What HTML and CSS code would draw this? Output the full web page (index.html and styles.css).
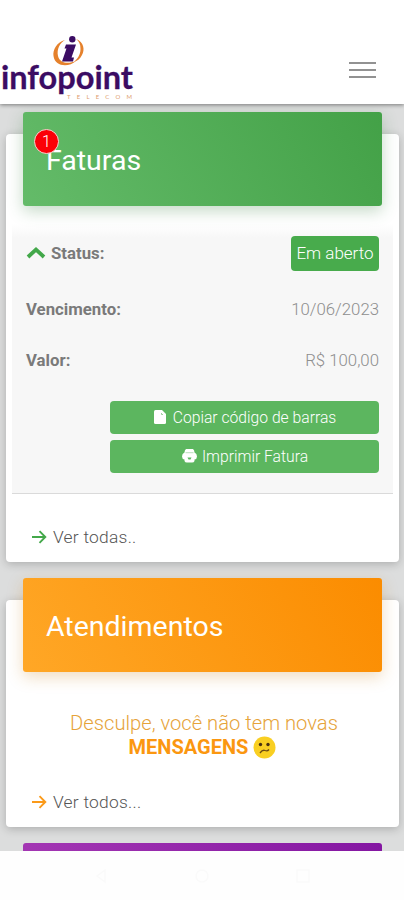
FILE: index.html
```html
<!DOCTYPE html>
<html lang="pt-BR">
<head>
<meta charset="utf-8">
<meta name="viewport" content="width=device-width, initial-scale=1">
<title>Infopoint Telecom</title>
<link rel="stylesheet" href="styles.css">
</head>
<body>
<header class="topbar">
  <svg class="logo" width="140" height="70" viewBox="0 0 140 70">
    <g fill="#e5812c">
      <path d="M65 7C57 9 52.500 17 53.500 23C55 34 69 34.500 76 28C69 31 60 31 58 23C56.500 16 60 10 65 7Z"/>
      <path d="M76 6C84 9 85 17 82 22C80 26 77 28 74 29C77 26 80.500 22 80.500 16C80.500 11 79 8 76 6Z"/>
    </g>
    <g fill="#3b0c63">
      <circle cx="72.300" cy="6.200" r="3.200"/>
      <path d="M66 11.500H76L71.500 24.500H74L73 28.500H62L66.500 15.500H64.500Z"/>
    </g>
    <text class="logo-name" x="1" y="55.500" textLength="132" lengthAdjust="spacingAndGlyphs">infopoint</text>
    <text class="logo-sub" x="67" y="65.500" textLength="65">TELECOM</text>
  </svg>
  <div class="burger"><i></i><i></i><i></i></div>
</header>
<main class="content">
  <section class="card card-invoices">
    <div class="card-head green"><span class="badge">1</span><h2>Faturas</h2></div>
    <div class="details">
      <div class="row status">
        <b><svg class="chevron" width="20" height="14" viewBox="0 0 20 14"><path d="M2 11L10 3.500L18 11" fill="none" stroke="#43a84a" stroke-width="3.800"/></svg>Status:</b>
        <span class="tag">Em aberto</span>
      </div>
      <div class="row due"><b>Vencimento:</b><span>10/06/2023</span></div>
      <div class="row value"><b>Valor:</b><span>R$ 100,00</span></div>
      <div class="actions">
        <div class="btn"><svg width="12" height="14" viewBox="0 0 12 14"><path d="M1.500 0H8L12 4V12.500Q12 14 10.500 14H1.500Q0 14 0 12.500V1.500Q0 0 1.500 0Z" fill="#fff"/><path d="M7.500 3V4.500H9" fill="none" stroke="#9bd19d"/></svg>Copiar código de barras</div>
        <div class="btn print"><svg width="15" height="14" viewBox="0 0 15 14"><path d="M4 0H11Q12.500 1 12.500 3.500Q15 4.500 15 7.500Q15 10 12.500 10.500V12Q12 13.500 10 13.500H5Q3 13.500 2.500 12V10.500Q0 10 0 7.500Q0 4.500 2.500 3.500Q2.500 1 4 0Z" fill="#fff"/><path d="M3.500 3.700H11.500" stroke="#9bd19d" stroke-width=".7"/><path d="M5.500 8.500H9.500L8.500 10.500H6.500Z" fill="#5cb860"/></svg>Imprimir Fatura</div>
      </div>
    </div>
    <div class="more"><svg width="16" height="14" viewBox="0 0 16 14"><path d="M1 7H14M8.500 1.200L14.300 7L8.500 12.800" fill="none" stroke="#43a84a" stroke-width="1.900"/></svg>Ver todas..</div>
  </section>
  <section class="card card-support">
    <div class="card-head orange"><h2>Atendimentos</h2></div>
    <p class="empty">Desculpe, você não tem novas<br><strong>MENSAGENS</strong><svg class="face" width="23" height="23" viewBox="0 0 23 23"><circle cx="11.500" cy="11.500" r="11" fill="#f9cf22"/><circle cx="7.500" cy="8.500" r="1.700" fill="#493112"/><circle cx="15" cy="8.500" r="1.700" fill="#493112"/><path d="M7 17Q9.500 13.500 12 14.500T16 13.500" fill="none" stroke="#6b4913" stroke-width="1.300"/></svg></p>
    <div class="more"><svg width="16" height="14" viewBox="0 0 16 14"><path d="M1 7H14M8.500 1.200L14.300 7L8.500 12.800" fill="none" stroke="#fb9a19" stroke-width="1.900"/></svg>Ver todos...</div>
  </section>
  <div class="next-head"></div>
</main>
<footer class="navbar">
  <svg width="16" height="16" viewBox="0 0 16 16"><path d="M12 2L4 8L12 14Z"/></svg>
  <svg width="16" height="16" viewBox="0 0 16 16"><circle cx="8" cy="8" r="6"/></svg>
  <svg width="16" height="16" viewBox="0 0 16 16"><path d="M2 2H14V14H2Z"/></svg>
</footer>
</body>
</html>
```
FILE: styles.css
```css
* { box-sizing: border-box; }
body {
  margin: 0;
  height: 900px;
  display: flex;
  flex-direction: column;
  overflow: hidden;
  background: #fefefe;
  font-family: Roboto, "Liberation Sans", sans-serif;
  font-size: 17px;
  font-weight: 300;
  color: #555;
}
h2, p { margin: 0; }
svg { flex: none; }
.topbar {
  height: 104px;
  flex: none;
  display: flex;
  justify-content: space-between;
  padding: 33px 28px 0 0;
  background: #fff;
  box-shadow: 0 1px 4px rgba(0, 0, 0, .45);
  z-index: 1;
}
.logo { overflow: visible; }
.logo-name { font: 700 33px Lato, sans-serif; fill: #3b0c63; stroke: #3b0c63; stroke-width: .3; }
.logo-sub { font: 400 6px Lato, sans-serif; fill: #e0a070; }
.burger {
  display: flex;
  flex-direction: column;
  gap: 5px;
  padding-top: 29px;
}
.burger i { width: 27px; height: 2px; background: #929292; }
.content {
  height: 747px;
  flex: none;
  overflow: hidden;
  padding: 30px 5px 0 6px;
  background: #dcdddd;
}
.card {
  display: flex;
  flex-direction: column;
  border-radius: 4px;
  background: #fff;
  box-shadow: 0 2px 10px rgba(0, 0, 0, .22);
}
.card-invoices { height: 428px; margin-bottom: 38px; }
.card-support { height: 227px; margin-bottom: 16px; }
.card-head {
  position: relative;
  height: 94px;
  flex: none;
  margin: -22px 17px 0;
  padding: 32px 23px 0;
  border-radius: 3px;
}
.card-head h2 {
  font-size: 28.5px;
  line-height: 34px;
  font-weight: 400;
  color: #fff;
}
.green { background: linear-gradient(60deg, #64bb69, #43a147); box-shadow: 0 5px 16px rgba(60, 130, 65, .3); }
.orange { background: linear-gradient(60deg, #ffa726, #fb8c00); box-shadow: 0 5px 16px rgba(200, 130, 30, .28); }
.badge {
  position: absolute;
  left: 11px;
  top: 17px;
  width: 25px;
  height: 25px;
  border: 1px solid #f5d5cf;
  border-radius: 50%;
  background: #fb0007;
  color: #fff;
  font-size: 16px;
  line-height: 23px;
  text-align: center;
}
.details {
  height: 270px;
  flex: none;
  margin: 18px 6px 0;
  padding: 12px 14px 0;
  border-bottom: 1px solid #dadada;
  background: linear-gradient(rgba(247, 247, 247, 0), #f7f7f7 14px);
}
.row {
  display: flex;
  justify-content: space-between;
  align-items: center;
  color: #8e8e8e;
  font-size: 16.8px;
}
.row b { display: flex; align-items: center; font-weight: 700; color: #7a7a7a; }
.status { height: 35px; }
.status b { padding-bottom: 2px; }
.due { height: 20px; margin-top: 28px; }
.value { height: 20px; margin-top: 31px; }
.chevron { margin-right: 5px; }
.tag {
  width: 88px;
  line-height: 35px;
  border-radius: 4px;
  background: #48ab4c;
  color: #fff;
  font-size: 17px;
  text-align: center;
}
.actions {
  display: flex;
  flex-direction: column;
  gap: 6px;
  margin: 31px 0 0 84px;
}
.btn {
  height: 33px;
  display: flex;
  align-items: center;
  justify-content: center;
  gap: 7px;
  padding: 0 0 1px 1px;
  border-radius: 4px;
  background: #5cb65f;
  color: #fff;
  font-size: 15.7px;
}
.print { gap: 5px; }
.more {
  display: flex;
  align-items: center;
  gap: 6px;
  height: 20px;
  margin: 33px 0 0 25px;
  font-size: 17.4px;
  letter-spacing: .25px;
}
.empty {
  margin-top: 39px;
  padding-left: 3px;
  text-align: center;
  font-size: 20.2px;
  line-height: 24px;
  color: #e6a33a;
}
.empty strong { color: #fb9710; font-weight: 700; font-size: 20px; }
.face { margin: 0 3px 0 5px; vertical-align: -5px; }
.next-head {
  height: 94px;
  margin: 0 17px;
  border-radius: 3px;
  background: linear-gradient(90deg, #a336b3, #8416a2);
}
.navbar {
  height: 49px;
  display: flex;
  justify-content: space-between;
  align-items: center;
  padding: 0 93px;
}
.navbar svg { fill: none; stroke: #fafafa; stroke-width: 1.5; }
```
